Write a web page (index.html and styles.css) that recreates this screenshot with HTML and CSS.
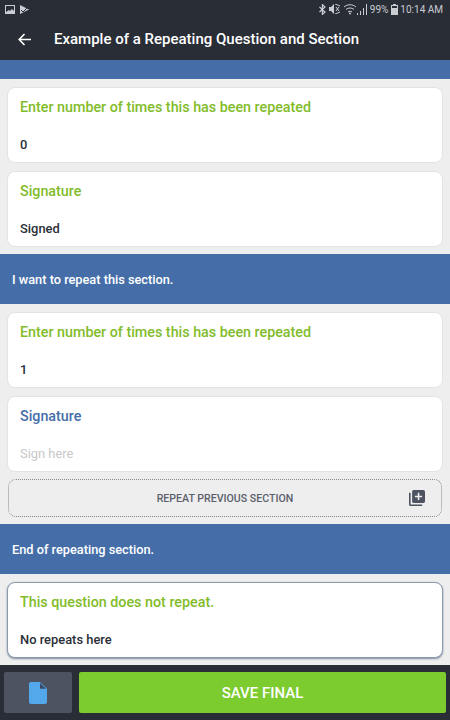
FILE: index.html
```html
<!DOCTYPE html>
<html lang="en">
<head>
    <meta charset="UTF-8">
    <meta name="viewport" content="width=device-width, initial-scale=1.0">
    <title>Example of a Repeating Question and Section</title>
    <link rel="stylesheet" href="styles.css">
</head>
<body>
    <header class="top">
        <div class="status">
            <div class="status-left">
                <svg width="10" height="9" viewBox="0 0 10 9"><path fill="#c9ccd1" d="M0 0h10v9H0z"/><path fill="#292d36" d="M1 1h8v5L7 4 5 6 4 5 1 7zM2 2h2v2H2z"/></svg>
                <svg width="9" height="9" viewBox="0 0 9 9"><path fill="#c9ccd1" d="M0 0l9 4.5L0 9z"/><path stroke="#292d36" fill="none" d="M1 5l2 2 5-5"/></svg>
            </div>
            <div class="status-right">
                <svg width="7" height="11" viewBox="0 0 7 11"><path fill="none" stroke="#c9ccd1" stroke-width="1.2" d="M0.5 3l5.500 5-2.600 2.400V0.600L6 3 0.500 8"/></svg>
                <svg width="11" height="10" viewBox="0 0 11 10"><path fill="#c9ccd1" d="M0 3h2l3-3v10L2 7H0z"/><path stroke="#c9ccd1" fill="none" d="M7 3l3 4M10 3L7 7M6 0l5 2M6 10l5-2"/></svg>
                <svg class="wifi" width="14" height="12" viewBox="0 0 14 12"><path fill="none" stroke="#c9ccd1" d="M1 4c3.500-3 8.500-3 12 0M3 6.500c2.500-2 5.500-2 8 0M5 9c1.200-1 2.800-1 4 0"/><circle cx="7" cy="10.500" r="1" fill="#c9ccd1"/></svg>
                <svg width="10" height="11" viewBox="0 0 10 11"><path fill="#c9ccd1" d="M0 9h1v2H0zM3 7h1v4H3zM6 4h1v7H6zM9 0h1v11H9z"/></svg>
                <span>99%</span>
                <svg class="battery" width="7" height="11" viewBox="0 0 7 11"><path fill="#c9ccd1" d="M2 0h3v1h2v10H0V1h2z"/><path fill="#292d36" d="M1 2h5v2H1z"/></svg>
                <span>10:14 AM</span>
            </div>
        </div>
        <div class="title-row">
            <svg class="back" width="13" height="13" viewBox="0 0 13 13"><path fill="none" stroke="#fff" stroke-width="1.600" d="M13 6.500H1.500M6.500 1L1.200 6.500 6.500 12"/></svg>
            <h1>Example of a Repeating Question and Section</h1>
        </div>
    </header>

    <main class="content">
        <div class="band band-cut"></div>

        <section class="card">
            <h2 class="label">Enter number of times this has been repeated</h2>
            <p class="value">0</p>
        </section>
        <section class="card">
            <h2 class="label">Signature</h2>
            <p class="value">Signed</p>
        </section>

        <div class="band">I want to repeat this section.</div>

        <section class="card">
            <h2 class="label">Enter number of times this has been repeated</h2>
            <p class="value">1</p>
        </section>
        <section class="card">
            <h2 class="label label-blue">Signature</h2>
            <p class="value value-empty">Sign here</p>
        </section>

        <button class="repeat">
            <span>REPEAT PREVIOUS SECTION</span>
            <svg class="repeat-icon" width="16" height="16" viewBox="0 0 17 17">
                <path fill="#4d5361" d="M0 3h1.700v12.300H14V17H1.700A1.700 1.700 0 0 1 0 15.300z"/>
                <path fill="#4d5361" d="M5 0h10.300A1.700 1.700 0 0 1 17 1.700V12a1.700 1.700 0 0 1-1.700 1.700H5A1.700 1.700 0 0 1 3.300 12V1.700A1.700 1.700 0 0 1 5 0z"/>
                <path fill="#eee" d="M9.300 3h1.700v3h3v1.700h-3v3H9.300v-3h-3V6h3z"/>
            </svg>
        </button>

        <div class="band">End of repeating section.</div>

        <section class="card card-active">
            <h2 class="label">This question does not repeat.</h2>
            <p class="value">No repeats here</p>
        </section>
    </main>

    <footer class="bottom">
        <button class="doc-btn">
            <svg width="18" height="22" viewBox="0 0 18 23" preserveAspectRatio="none">
                <path fill="#53a8ec" d="M2 0h9l7 7v14a2 2 0 0 1-2 2H2a2 2 0 0 1-2-2V2a2 2 0 0 1 2-2z"/>
                <path fill="#3d4a63" d="M11 1l6 6h-6z"/>
            </svg>
        </button>
        <button class="save-btn">SAVE FINAL</button>
    </footer>
</body>
</html>
```

FILE: styles.css
```css
* {
    box-sizing: border-box;
}
body {
    margin: 0;
    width: 450px;
    height: 720px;
    overflow: hidden;
    display: flex;
    flex-direction: column;
    font-family: Roboto, "Liberation Sans", sans-serif;
    background-color: #eeeeee;
}
.top {
    height: 60px;
    flex: none;
    background-color: #292d36;
    color: #ffffff;
}
.status {
    height: 18px;
    padding: 0 7px 0 5px;
    display: flex;
    align-items: center;
    justify-content: space-between;
    color: #c9ccd1;
    font-size: 10px;
}
.status-left,
.status-right {
    display: flex;
    align-items: center;
    gap: 3px;
}
.status-left {
    gap: 5px;
}
.wifi {
    margin-right: -3px;
}
.battery {
    margin-right: -1px;
}
.title-row {
    height: 42px;
    display: flex;
    align-items: center;
    padding-left: 18px;
}
.back {
    margin-right: 23px;
}
h1 {
    margin: 0;
    font-size: 15px;
    font-weight: 500;
}
.content {
    flex: 1;
    overflow: hidden;
}
.band {
    height: 50px;
    margin: 7px 0 8px;
    padding-left: 12px;
    display: flex;
    align-items: center;
    background-color: #456ea9;
    color: #ffffff;
    font-size: 12.75px;
    font-weight: 500;
}
.band-cut {
    height: 19px;
    margin-top: 0;
}
.card {
    height: 76px;
    margin: 0 7px;
    padding: 10px 12px 0;
    background-color: #ffffff;
    border: 1px solid #e3e3e3;
    border-radius: 8px;
}
.card + .card {
    margin-top: 8px;
}
.card-active {
    border-color: #8b99ad;
    box-shadow: 0 1px 2px #7d8aa0;
}
.label {
    margin: 0;
    color: #82bc2a;
    font-size: 14.3px;
    line-height: 18px;
    font-weight: 500;
}
.label-blue {
    color: #456ea9;
}
.value {
    margin: 21px 0 0;
    color: #2b2f38;
    font-size: 12.9px;
    line-height: 16px;
    font-weight: 500;
}
.value-empty {
    color: #c8c8c8;
    font-weight: 400;
}
.repeat {
    position: relative;
    display: flex;
    align-items: center;
    justify-content: center;
    width: 434px;
    height: 38px;
    margin: 7px 8px 0;
    padding: 0;
    background-color: #eeeeee;
    border: 1px dotted #8a8a8a;
    border-radius: 8px;
    color: #5b606c;
    font-family: inherit;
    font-size: 10.6px;
    font-weight: 500;
}
.repeat-icon {
    position: absolute;
    right: 16px;
    top: 10px;
}
.bottom {
    height: 55px;
    flex: none;
    display: flex;
    gap: 7px;
    padding: 7px 4px;
    background-color: #292d36;
}
.doc-btn {
    width: 68px;
    padding: 0;
    display: flex;
    align-items: center;
    justify-content: center;
    background-color: #4d5361;
    border: none;
    border-radius: 2px;
}
.save-btn {
    flex: 1;
    background-color: #7ccb2f;
    color: #ffffff;
    border: none;
    border-radius: 2px;
    font-family: inherit;
    font-size: 15px;
    font-weight: 500;
}
```
